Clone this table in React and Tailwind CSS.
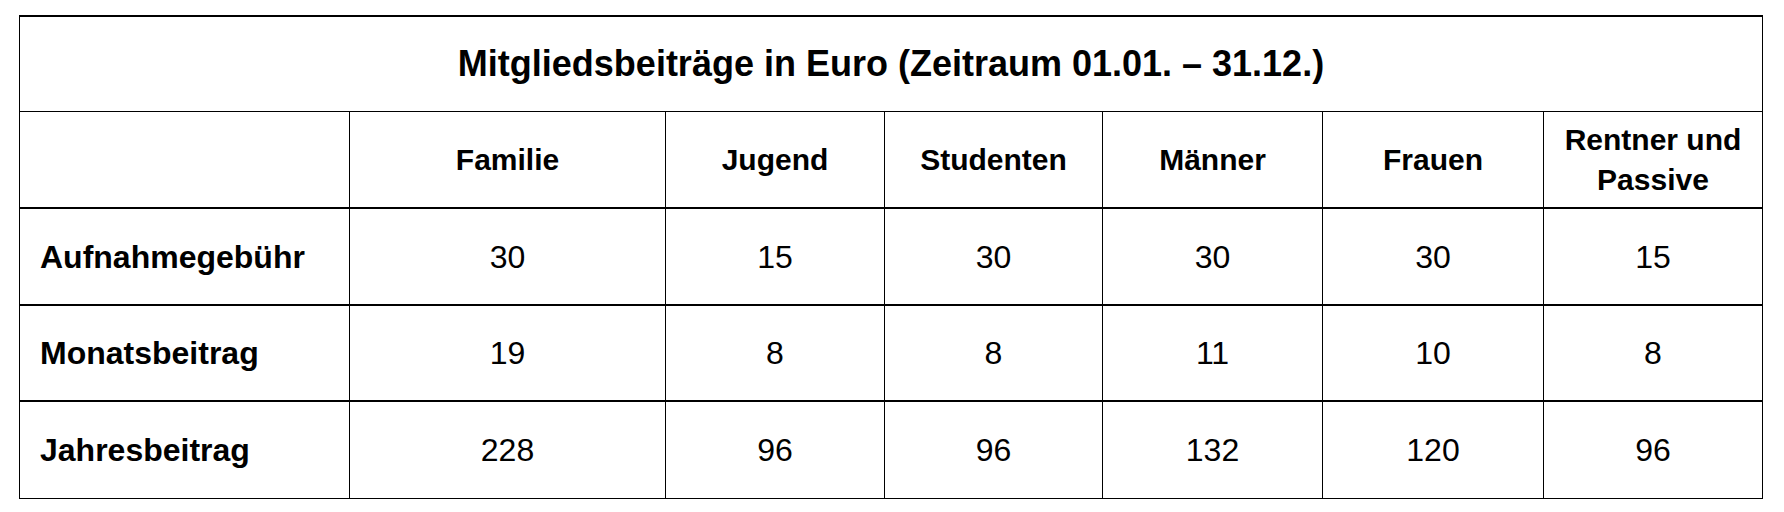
import React from "react";

const cols = ["Familie", "Jugend", "Studenten", "Männer", "Frauen"];
const rows = [
  ["Aufnahmegebühr", ["30", "15", "30", "30", "30", "15"]],
  ["Monatsbeitrag", ["19", "8", "8", "11", "10", "8"]],
  ["Jahresbeitrag", ["228", "96", "96", "132", "120", "96"]],
];

const grid =
  "grid grid-cols-[329px_316px_219px_218px_220px_221px_219px]";

export default function App() {
  return (
    <div
      className="w-[1784px] h-[512px] bg-white text-black pt-[15px] pl-[19px]"
      style={{ fontFamily: "'Liberation Sans Narrow', 'Arial Narrow', 'Liberation Sans', sans-serif" }}
    >
      <div className="w-[1744px] border-l border-r border-t-2 border-b border-black">
        <div className="h-[95px] border-b border-black flex items-center justify-center text-[36px] font-bold">
          Mitgliedsbeiträge in Euro (Zeitraum 01.01. – 31.12.)
        </div>
        <div className={`${grid} h-[97px] border-b-2 border-black text-[30px] font-bold`}>
          <div />
          {cols.map((c) => (
            <div key={c} className="border-l border-black flex items-center justify-center">
              {c}
            </div>
          ))}
          <div className="border-l border-black flex items-center justify-center text-center leading-[40px]">
            Rentner und
            <br />
            Passive
          </div>
        </div>
        {rows.map(([label, vals], i) => (
          <div
            key={label}
            className={`${grid} ${i === 0 ? "h-[97px]" : "h-[96px]"} ${i < 2 ? "border-b-2 border-black" : ""} text-[32px]`}
          >
            <div className="flex items-center pl-[20px] font-bold">{label}</div>
            {vals.map((v, j) => (
              <div key={j} className="border-l border-black flex items-center justify-center">
                {v}
              </div>
            ))}
          </div>
        ))}
      </div>
    </div>
  );
}
